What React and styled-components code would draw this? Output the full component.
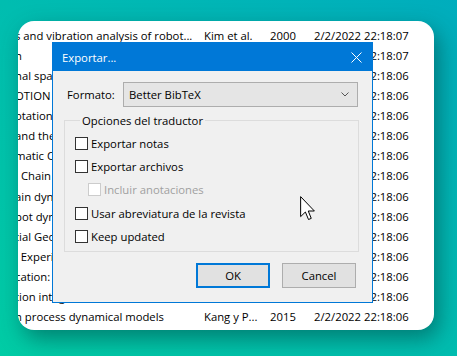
import React from "react";
import styled, { createGlobalStyle } from "styled-components";

const FS = "11.3px";

const Global = createGlobalStyle`
  html, body { margin: 0; padding: 0; }
  body {
    width: 457px;
    height: 356px;
    overflow: hidden;
    font-family: "Segoe UI", "Open Sans", "Noto Sans", sans-serif;
  }
`;

const Page = styled.div`
  position: relative;
  box-sizing: border-box;
  width: 457px;
  height: 356px;
  padding: 21px 23px 26px 18px;
  background: linear-gradient(to top right, #00cca5 0%, #00bdb0 50%, #00adbd 100%);
  display: flex;
`;

const Card = styled.div`
  flex: 1;
  background: #fff;
  border-radius: 16px;
  overflow: hidden;
  box-shadow: 5px 9px 22px rgba(0, 60, 60, 0.5);
  padding-top: 5px;
`;

const List = styled.div`
  margin-left: -3px;
  display: flex;
  flex-direction: column;
`;

const Row = styled.div`
  display: grid;
  grid-template-columns: 189px 66px 44px auto;
  height: 20.07px;
  line-height: 20px;
  font-size: ${FS};
  color: #000;
  white-space: nowrap;
`;

const Cell = styled.div`
  overflow: hidden;
  padding-right: ${(p) => (p.$pad ? "8px" : "0")};
`;

const Dialog = styled.div`
  position: absolute;
  left: 52px;
  top: 42px;
  width: 321px;
  height: 261px;
  box-sizing: border-box;
  border: 1px solid #0078d7;
  background: #f0f0f0;
  display: flex;
  flex-direction: column;
  font-size: ${FS};
  color: #000;
`;

const TitleBar = styled.div`
  height: 28px;
  background: #0078d7;
  color: #fff;
  display: flex;
  align-items: center;
  justify-content: space-between;
  padding: 0 10px 0 9px;
`;

const Title = styled.span`
  font-size: ${FS};
`;

const Body = styled.div`
  flex: 1;
  display: flex;
  flex-direction: column;
  padding: 11px 13px 13px 11px;
`;

const FormatRow = styled.div`
  display: flex;
  align-items: center;
  padding-left: 3px;
`;

const Label = styled.span`
  width: 56px;
`;

const Select = styled.div`
  flex: 1;
  height: 25px;
  box-sizing: border-box;
  border: 1px solid #adadad;
  background: #e5e5e5;
  display: flex;
  align-items: center;
  justify-content: space-between;
  padding: 0 8px 0 5px;
  margin-right: 1px;
`;

const Group = styled.fieldset`
  margin: 6px 0 0 0;
  padding: 9px 10px 8px 10px;
  border: 1px solid #dcdcdc;
  display: flex;
  flex-direction: column;
  gap: 10.2px;
`;

const Legend = styled.legend`
  padding: 0 2px;
  margin-left: 5px;
  font-size: ${FS};
`;

const Check = styled.label`
  display: flex;
  align-items: center;
  gap: 3px;
  height: 13px;
  line-height: 13px;
  margin-left: ${(p) => (p.$indent ? "13px" : "0")};
  color: ${(p) => (p.$disabled ? "#a0a0a0" : "#000")};
`;

const Box = styled.span`
  width: 13px;
  height: 13px;
  box-sizing: border-box;
  border: 1px solid ${(p) => (p.$disabled ? "#cccccc" : "#333")};
  background: #fff;
  flex: none;
`;

const Buttons = styled.div`
  display: flex;
  justify-content: flex-end;
  gap: 12px;
  margin-top: 11px;
  padding-right: 3px;
`;

const Button = styled.div`
  width: 74px;
  height: 25px;
  box-sizing: border-box;
  border: ${(p) => (p.$primary ? "2px solid #0078d7" : "1px solid #adadad")};
  background: #e1e1e1;
  display: flex;
  align-items: center;
  justify-content: center;
`;

const Cursor = styled.svg`
  position: absolute;
  left: 300px;
  top: 196px;
`;

const rows = [
  ["s and vibration analysis of robot...", "Kim et al.", "2000", "2/2/2022 22:18:07"],
  ["n", "Lee y Park", "1999", "2/2/2022 22:18:07"],
  ["nal space robots", "Smith", "2001", "2/2/2022 22:18:06"],
  ["OTION", "Brown", "1998", "2/2/2022 22:18:06"],
  ["otation", "Chen", "2003", "2/2/2022 22:18:06"],
  ["and the", "Wang", "2005", "2/2/2022 22:18:06"],
  ["matic C", "Garcia", "2007", "2/2/2022 22:18:06"],
  [": Chain", "Lopez", "2010", "2/2/2022 22:18:06"],
  ["ain dynamics", "Zhang", "2012", "2/2/2022 22:18:06"],
  ["bot dynamics", "Liu", "2008", "2/2/2022 22:18:06"],
  ["tial Geometry", "Murray", "1994", "2/2/2022 22:18:06"],
  ["l Experiments", "Khalil", "2002", "2/2/2022 22:18:06"],
  ["cation: a", "Gautier", "1990", "2/2/2022 22:18:06"],
  ["tion integral", "Swevers", "1997", "2/2/2022 22:18:06"],
  ["n process dynamical models", "Kang y P...", "2015", "2/2/2022 22:18:06"],
];

export default function App() {
  return (
    <>
      <Global />
      <Page>
        <Card>
          <List>
            {rows.map((r, i) => (
              <Row key={i}>
                <Cell $pad>{r[0]}</Cell>
                <Cell>{r[1]}</Cell>
                <Cell>{r[2]}</Cell>
                <Cell>{r[3]}</Cell>
              </Row>
            ))}
          </List>
        </Card>
        <Dialog>
          <TitleBar>
            <Title>Exportar...</Title>
            <svg width="11" height="11" viewBox="0 0 11 11">
              <path d="M0.5 0.5 L10.5 10.5 M10.5 0.5 L0.5 10.5" stroke="#fff" strokeWidth="1" />
            </svg>
          </TitleBar>
          <Body>
            <FormatRow>
              <Label>Formato:</Label>
              <Select>
                <span>Better BibTeX</span>
                <svg width="8" height="5" viewBox="0 0 8 5">
                  <path d="M0.5 0.5 L4 4 L7.5 0.5" stroke="#555" fill="none" strokeWidth="1" />
                </svg>
              </Select>
            </FormatRow>
            <Group>
              <Legend>Opciones del traductor</Legend>
              <Check><Box />Exportar notas</Check>
              <Check><Box />Exportar archivos</Check>
              <Check $indent $disabled><Box $disabled />Incluir anotaciones</Check>
              <Check><Box />Usar abreviatura de la revista</Check>
              <Check><Box />Keep updated</Check>
            </Group>
            <Buttons>
              <Button $primary>OK</Button>
              <Button>Cancel</Button>
            </Buttons>
          </Body>
        </Dialog>
        <Cursor width="15" height="25" viewBox="0 0 12 20">
          <path d="M0.5 0.5 L0.5 16.5 L4.3 12.8 L6.8 18.8 L9 17.9 L6.6 12 L11.5 12 Z" fill="#fff" stroke="#000" strokeWidth="0.8" strokeLinejoin="miter" />
        </Cursor>
      </Page>
    </>
  );
}
